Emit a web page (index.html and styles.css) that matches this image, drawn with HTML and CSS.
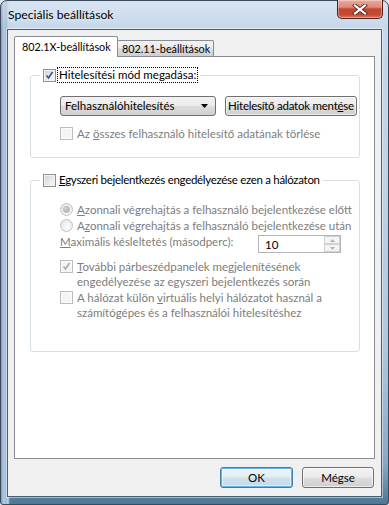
FILE: index.html
```html
<!DOCTYPE html>
<html lang="hu">
<head>
<meta charset="utf-8">
<title>Speciális beállítások</title>
<link rel="stylesheet" href="styles.css">
</head>
<body>
<div class="window">
  <div class="titlebar">
    <span class="title">Speciális beállítások</span>
    <div class="close">
      <svg width="16" height="11" viewBox="0 0 16 11"><path d="M3 1.5 L13 9.5 M13 1.5 L3 9.5" stroke="#5a2a22" stroke-width="4" stroke-linecap="square"/><path d="M3 1.5 L13 9.5 M13 1.5 L3 9.5" stroke="#ffffff" stroke-width="2.2" stroke-linecap="square"/></svg>
    </div>
  </div>
  <div class="client">
    <div class="tabs">
      <div class="tab active">802.1X-beállítások</div>
      <div class="tab">802.11-beállítások</div>
    </div>
    <div class="panel">
      <fieldset class="group g1">
        <legend class="legend"><span class="cb"><svg class="tick" viewBox="0 0 9 9"><path d="M1.5 4.5 L3.5 7 L7.5 1" fill="none" stroke="#3c5394" stroke-width="1.6"/></svg></span><span class="focus">Hitelesítési mód megadása:</span></legend>
        <div class="controls">
          <div class="combo"><span>Felhasználóhitelesítés</span><svg class="arrow" width="7" height="4" viewBox="0 0 7 4"><path d="M0 0 H7 L3.5 4 Z" fill="#000"/></svg></div>
          <div class="btn save">Hitelesítő adatok ment<u>é</u>se</div>
        </div>
        <div class="opt disabled first"><span class="cb dis"></span><span>Az <u>ö</u>sszes felhasználó hitelesítő adatának törlése</span></div>
      </fieldset>
      <fieldset class="group g2">
        <legend class="legend"><span class="cb"></span><span class="ltext"><u>E</u>gyszeri bejelentkezés engedélyezése ezen a hálózaton</span></legend>
        <div class="opt disabled r1"><span class="rb sel"></span><span><u>A</u>zonnali végrehajtás a felhasználó bejelentkezése előtt</span></div>
        <div class="opt disabled"><span class="rb"></span><span>A<u>z</u>onnali végrehajtás a felhasználó bejelentkezése után</span></div>
        <div class="delay disabled">
          <span class="dlabel"><u>M</u>aximális késleltetés (másodperc):</span>
          <div class="spin"><span class="val">10</span><div class="arrows"><div class="ab"><svg width="5" height="3" viewBox="0 0 5 3"><path d="M0 3 L2.5 0 L5 3 Z" fill="#b4b4b4"/></svg></div><div class="ab"><svg width="5" height="3" viewBox="0 0 5 3"><path d="M0 0 L2.5 3 L5 0 Z" fill="#b4b4b4"/></svg></div></div></div>
        </div>
        <div class="opt disabled multi"><span class="cb dis"><svg class="tick" viewBox="0 0 9 9"><path d="M1.5 4.5 L3.5 7 L7.5 1" fill="none" stroke="#a9a9a9" stroke-width="1.6"/></svg></span><span><u>T</u>ovábbi párbeszédpanelek megjelenítésének<br>engedélyezése az egyszeri bejelentkezés során</span></div>
        <div class="opt disabled multi"><span class="cb dis"></span><span>A hálózat külön <u>v</u>irtuális helyi hálózatot használ a<br>számítógépes és a felhasználói hitelesítéshez</span></div>
      </fieldset>
    </div>
    <div class="buttons">
      <div class="btn ok">OK</div>
      <div class="btn cancel">Mégse</div>
    </div>
  </div>
</div>
</body>
</html>
```
FILE: styles.css
```css
html { background: #dfe6ee; }
body {
  margin: 0;
  width: 389px;
  height: 505px;
  overflow: hidden;
  font-family: Lato, "Noto Sans", sans-serif;
  font-size: 11.5px;
  color: #000;
}
u { text-decoration: underline; text-underline-offset: 1px; }

.window {
  width: 389px;
  height: 505px;
  box-sizing: border-box;
  border: 1px solid #3a4a5a;
  border-radius: 7px 7px 3px 3px;
  padding: 0 6px 7px 6px;
  display: flex;
  flex-direction: column;
  background:
    linear-gradient(180deg, rgba(255,255,255,0.3) 0%, rgba(255,255,255,0) 30px),
    linear-gradient(90deg, #7d9fc2 0px, #b7cce2 3px, #9bb7d4 5px, #c0d3e8 7px, rgba(192,211,232,0) 9px),
    linear-gradient(180deg, #c6d8ec 0%, #bfd2e8 35%, #aec7e0 70%, #86a8c8 92%, #4b7896 100%);
}

.titlebar {
  height: 29px;
  display: flex;
  align-items: flex-start;
  justify-content: space-between;
}
.title {
  margin: 6px 0 0 1px;
  font-size: 12.2px;
  line-height: 16px;
  color: #000;
  text-shadow: 0 0 6px rgba(255,255,255,0.9);
}
.close {
  width: 46px;
  height: 19px;
  box-sizing: border-box;
  margin-top: -1px;
  margin-right: -1px;
  border: 1px solid #4e1f18;
  border-top: none;
  border-radius: 0 0 5px 5px;
  background: linear-gradient(180deg, #e9a99a 0%, #dd8a78 40%, #c6452f 50%, #c24a33 80%, #d5765c 100%);
  box-shadow: inset 0 0 0 1px rgba(255,255,255,0.35);
  display: flex;
  align-items: center;
  justify-content: center;
}

.client {
  flex: 1;
  background: #f0f0f0;
  border: 1px solid #4e5e70;
  box-shadow: 0 0 0 1px rgba(255,255,255,0.45);
  padding: 6px 6px 8px 6px;
  display: flex;
  flex-direction: column;
}

.tabs {
  display: flex;
  align-items: flex-end;
  height: 20px;
  position: relative;
  z-index: 1;
}
.tab {
  box-sizing: border-box;
  border: 1px solid #898c95;
  border-bottom: none;
  font-size: 10.8px;
  line-height: 14px;
  white-space: nowrap;
}
.tab.active {
  width: 104px;
  height: 21px;
  margin-bottom: -1px;
  background: #fff;
  padding: 3px 0 0 7px;
  position: relative;
  z-index: 2;
  border-radius: 2px 2px 0 0;
}
.tab:not(.active) {
  width: 97px;
  height: 16px;
  margin-left: -1px;
  padding: 1px 0 0 4px;
  background: linear-gradient(180deg, #f3f3f3 0%, #ebebeb 45%, #dddddd 50%, #cfcfcf 100%);
  border-radius: 2px 2px 0 0;
}

.panel {
  height: 403px;
  box-sizing: border-box;
  background: #fff;
  border: 1px solid #898c95;
  padding: 0 14px 0 15px;
}

.group {
  margin: 0;
  border: 1px solid #d5dfe5;
  border-radius: 3px;
  padding: 0;
  min-width: 0;
}
.group > div { margin-left: 29px; }
.g1 { margin-top: 10px; padding-bottom: 16px; }
.g2 { margin-top: 14px; padding-bottom: 31px; }

.legend {
  margin-left: 9px;
  padding: 0 3px 0 3px;
  height: 16px;
  display: flex;
  align-items: center;
  gap: 2px;
  line-height: 14px;
  white-space: nowrap;
}
.focus {
  outline: 1px dotted #000;
  outline-offset: 0;
  padding: 0 1px;
  line-height: 14px;
}
.ltext { padding-left: 1px; letter-spacing: -0.3px; }

.cb {
  width: 13px;
  height: 13px;
  flex: none;
  box-sizing: border-box;
  border: 1px solid #8e8f8f;
  background: linear-gradient(135deg, #cbcfd5 0%, #e8e9ea 55%, #f7f7f7 100%);
  box-shadow: inset 0 0 0 1px #f4f4f4;
  display: flex;
  align-items: center;
  justify-content: center;
}
.cb.dis {
  border-color: #bcbcbc;
  background: #f4f4f4;
  box-shadow: inset 0 0 0 1px #fbfbfb;
}
.tick { width: 9px; height: 9px; }

.rb {
  width: 13px;
  height: 13px;
  flex: none;
  box-sizing: border-box;
  border-radius: 50%;
  border: 1px solid #c2c2c2;
  background: radial-gradient(circle at 60% 65%, #fdfdfd 0%, #ececec 60%, #dcdcdc 100%);
  display: flex;
  align-items: center;
  justify-content: center;
}
.rb.sel::after {
  content: "";
  width: 5px;
  height: 5px;
  border-radius: 50%;
  background: radial-gradient(circle at 40% 35%, #d8d8d8, #9a9a9a);
  box-shadow: 0 0 0 1px #bdbdbd;
}

.controls {
  display: flex;
  margin-top: 13px;
  gap: 9px;
}
.combo {
  width: 156px;
  height: 20px;
  box-sizing: border-box;
  border: 1px solid #707070;
  border-radius: 3px;
  background: linear-gradient(180deg, #f2f2f2 0%, #ebebeb 48%, #dddddd 52%, #cfcfcf 100%);
  display: flex;
  align-items: center;
  justify-content: space-between;
  padding: 0 7px 0 4px;
  line-height: 14px;
  white-space: nowrap;
}
.btn {
  height: 20px;
  box-sizing: border-box;
  border: 1px solid #707070;
  border-radius: 3px;
  background: linear-gradient(180deg, #f2f2f2 0%, #ebebeb 48%, #dddddd 52%, #cfcfcf 100%);
  box-shadow: inset 0 0 0 1px rgba(255,255,255,0.6);
  display: flex;
  align-items: center;
  justify-content: center;
  line-height: 14px;
  white-space: nowrap;
}
.save { width: 132px; letter-spacing: -0.25px; }

.opt {
  display: flex;
  align-items: flex-start;
  gap: 4px;
  line-height: 15px;
  white-space: nowrap;
}
.opt > .cb, .opt > .rb { margin-top: 1px; }
.opt.first { margin-top: 10px; }
.opt.r1 { margin-top: 14px; }
.opt + .opt { margin-top: 1px; }
.opt.multi { margin-top: 6px; }
.opt.multi + .opt.multi { margin-top: 1px; }

.disabled { color: #7d7d7d; }

.delay {
  display: flex;
  align-items: flex-start;
  margin-top: 1px;
  line-height: 15px;
  white-space: nowrap;
}
.dlabel { width: 198px; }
.spin {
  width: 83px;
  height: 18px;
  margin-top: 1px;
  box-sizing: border-box;
  border: 1px solid #b5b5b5;
  background: #fff;
  display: flex;
  justify-content: space-between;
  color: #000;
}
.val { padding: 1px 0 0 6px; line-height: 15px; }
.arrows {
  width: 16px;
  display: flex;
  flex-direction: column;
}
.ab {
  flex: 1;
  box-sizing: border-box;
  border: 1px solid #d2d2d2;
  background: #f4f4f4;
  display: flex;
  align-items: center;
  justify-content: center;
}

.buttons {
  display: flex;
  justify-content: flex-end;
  gap: 9px;
  margin-top: 8px;
  padding-right: 1px;
}
.buttons .btn { height: 21px; }
.ok {
  width: 73px;
  border-color: #3c7fb1;
  background: linear-gradient(180deg, #eef5fa 0%, #e1edf5 48%, #cfe1ed 52%, #c4d9e8 100%);
  box-shadow: inset 0 0 0 1px #63b4e4, inset 0 0 0 2px rgba(255,255,255,0.5);
}
.cancel { width: 72px; }
```
